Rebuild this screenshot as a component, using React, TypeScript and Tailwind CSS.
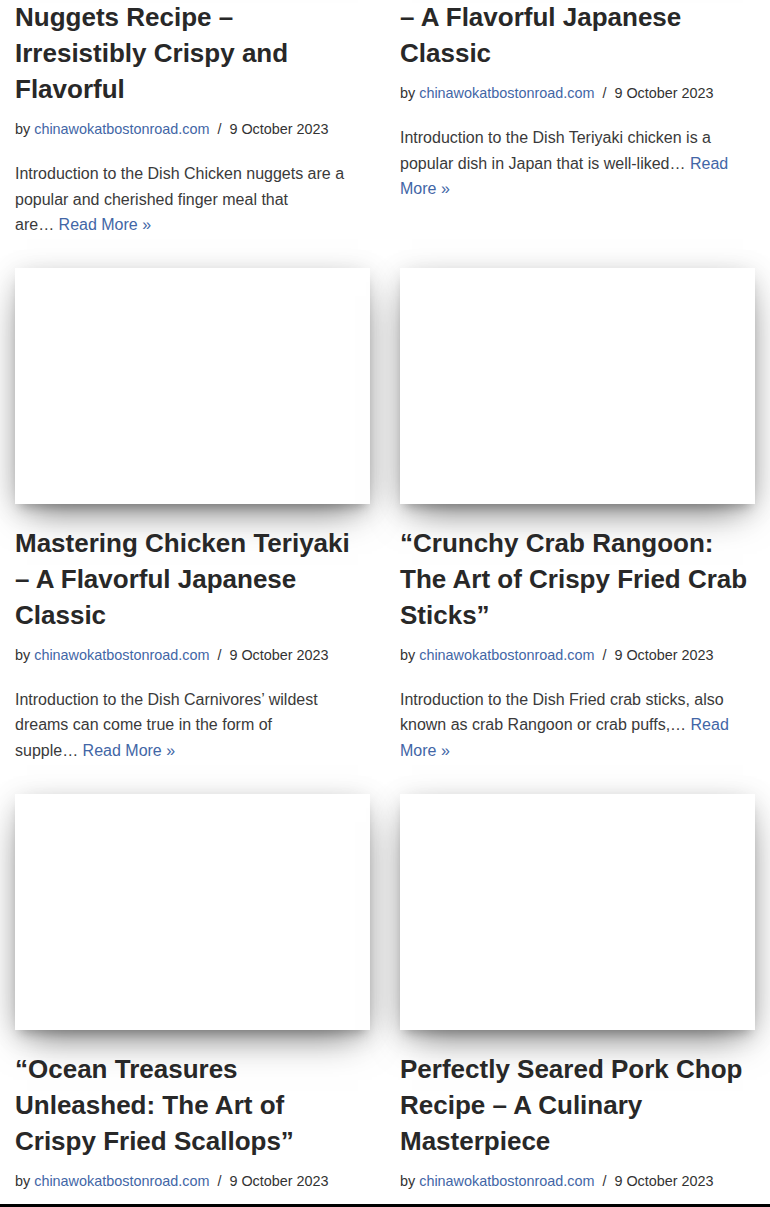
import React from 'react';

interface Post {
  title: string;
  excerpt: string;
}

const posts: Post[] = [
  {
    title: 'The Perfect Chicken Nuggets Recipe – Irresistibly Crispy and Flavorful',
    excerpt: 'Introduction to the Dish Chicken nuggets are a popular and cherished finger meal that are…',
  },
  {
    title: 'Mastering Chicken Teriyaki – A Flavorful Japanese Classic',
    excerpt: 'Introduction to the Dish Teriyaki chicken is a popular dish in Japan that is well-liked…',
  },
  {
    title: 'Mastering Chicken Teriyaki – A Flavorful Japanese Classic',
    excerpt: 'Introduction to the Dish Carnivores’ wildest dreams can come true in the form of supple…',
  },
  {
    title: '“Crunchy Crab Rangoon: The Art of Crispy Fried Crab Sticks”',
    excerpt: 'Introduction to the Dish Fried crab sticks, also known as crab Rangoon or crab puffs,…',
  },
  {
    title: '“Ocean Treasures Unleashed: The Art of Crispy Fried Scallops”',
    excerpt: 'Introduction to the Dish Scallops are a delicacy of the sea that are loved…',
  },
  {
    title: 'Perfectly Seared Pork Chop Recipe – A Culinary Masterpiece',
    excerpt: 'Introduction to the Dish Pork chops are one of the most versatile cuts of meat…',
  },
];

const PostCard: React.FC<{ post: Post }> = ({ post }) => (
  <article className="flex flex-col">
    <div className="h-[236px] bg-white shadow-[0_16px_38px_-12px_rgba(0,0,0,0.56),0_4px_25px_0_rgba(0,0,0,0.12),0_8px_10px_-5px_rgba(0,0,0,0.2)]" />
    <h2 className="mt-[21px] text-[26px] leading-[36px] font-bold text-[#282828]">
      {post.title}
    </h2>
    <div className="mt-[11px] text-[14.4px] leading-[22px] text-[#333333]">
      by <a href="#" className="text-[#4266a6]">chinawokatbostonroad.com</a>
      <span className="mx-[8px]">/</span>
      9 October 2023
    </div>
    <p className="mt-[21px] text-[16px] leading-[25.6px] text-[#3a3a3a]">
      {post.excerpt}
      {'\u00a0'}
      <a href="#" className="text-[#4266a6]">Read More »</a>
    </p>
  </article>
);

export default function App() {
  return (
    <div className="min-h-screen bg-white overflow-hidden font-['Liberation_Sans',Arial,sans-serif]">
      {/* page is scrolled: first row of cards sits partly above the viewport */}
      <div className="mt-[-294px] grid grid-cols-2 gap-x-[30px] gap-y-[30px] px-[15px] pb-10">
        {posts.map((p, i) => (
          <PostCard key={i} post={p} />
        ))}
      </div>
      <div className="fixed bottom-0 left-0 right-0 h-[3px] bg-black" />
    </div>
  );
}
